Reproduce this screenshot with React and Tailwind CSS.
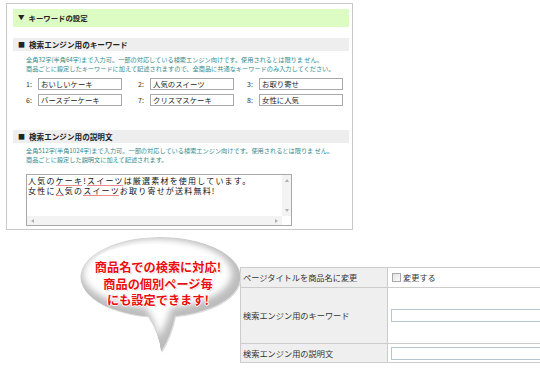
import React from 'react';

const FONT = "font-['Noto_Sans_CJK_JP','Noto_Sans',sans-serif]";

const KEYWORDS = [
    ['1:', 'おいしいケーキ'],
    ['2:', '人気のスイーツ'],
    ['3:', 'お取り寄せ'],
    ['6:', 'バースデーケーキ'],
    ['7:', 'クリスマスケーキ'],
    ['8:', '女性に人気'],
];

const BUBBLE_PATH = 'M148 316.5 A80 40 0 1 1 175 316.3 Q171 336 161 352 Q159 334 148 316.5 Z';

const Squiggle = ({ children }) => (
    <span className="relative inline-block">
        {children}
        <span className="absolute left-0 right-[1px] bottom-[-0.5px] h-[1px] bg-[#ec8c8c]"></span>
    </span>
);

const SectionHead = ({ children, className = '' }) => (
    <div className={`h-[13px] bg-[#eeeeee] pl-[5px] flex items-center text-[7.6px] font-bold text-[#222] ${className}`}>
        <span className="mr-[4px] text-[7px]">■</span>
        {children}
    </div>
);

const Note = ({ lines }) => (
    <div className="pl-[13px] text-[6.2px] leading-[9px] text-[#2f8a8a] whitespace-nowrap">
        {lines.map((l) => (
            <div key={l}>{l}</div>
        ))}
    </div>
);

const Bubble = () => (
    <div className="relative w-[180px] h-[125px] ml-[70px] mt-[2px] shrink-0">
        <svg width="180" height="125" viewBox="70 232 180 125" className="block">
            <defs>
                <clipPath id="bubbleClip">
                    <path d={BUBBLE_PATH} />
                </clipPath>
                <filter id="soft" x="-20%" y="-20%" width="140%" height="140%">
                    <feGaussianBlur stdDeviation="4" />
                </filter>
            </defs>
            <path d={BUBBLE_PATH} fill="#dcdcdc" transform="translate(1 1)" />
            <g clipPath="url(#bubbleClip)">
                <path d={BUBBLE_PATH} fill="#bdbdbd" />
                <path
                    d={BUBBLE_PATH}
                    fill="#ffffff"
                    filter="url(#soft)"
                    transform="translate(157 276) scale(0.93 0.86) translate(-160 -280)"
                />
                <ellipse cx="152" cy="266" rx="60" ry="22" fill="#ffffff" opacity="0.85" />
            </g>
        </svg>
        <div className="absolute left-[8px] top-[27px] w-[160px] text-center text-[12.2px] leading-[16.5px] font-bold text-[#ea0f0f] whitespace-nowrap [text-shadow:1px_0_0_#fff,-1px_0_0_#fff,0_1px_0_#fff,0_-1px_0_#fff,1px_1px_1px_#bbb]">
            <div>商品名での検索に対応!</div>
            <div>商品の個別ページ毎</div>
            <div>にも設定できます!</div>
        </div>
    </div>
);

const SettingsTable = () => (
    <table className="mt-[37px] ml-[-10px] w-[302px] shrink-0 border-collapse text-[8.2px] text-[#333]">
        <tbody>
            <tr className="h-[20px]">
                <td className="w-[163px] border border-[#cccccc] bg-[#efefef] pl-[2px] align-middle whitespace-nowrap">ページタイトルを商品名に変更</td>
                <td className="border border-[#cccccc] bg-white pl-[4px] align-middle">
                    <div className="flex items-center gap-[2px]">
                        <span className="w-[9px] h-[9px] border border-[#a9a9a9] bg-gradient-to-br from-[#e4e4e4] to-[#fafafa]"></span>
                        <span>変更する</span>
                    </div>
                </td>
            </tr>
            <tr className="h-[56px]">
                <td className="border border-[#cccccc] bg-[#efefef] pl-[2px] align-middle whitespace-nowrap">検索エンジン用のキーワード</td>
                <td className="border border-[#cccccc] bg-white pl-[3px] align-middle">
                    <div className="h-[13px] w-[150px] border border-[#b7c6ce] bg-white"></div>
                </td>
            </tr>
            <tr className="h-[19px]">
                <td className="border border-[#cccccc] bg-[#efefef] pl-[2px] align-middle whitespace-nowrap">検索エンジン用の説明文</td>
                <td className="border border-[#cccccc] bg-white pl-[3px] align-middle">
                    <div className="h-[13px] w-[150px] border border-[#b7c6ce] bg-white"></div>
                </td>
            </tr>
        </tbody>
    </table>
);

export default function App() {
    return (
        <div className={`w-[540px] h-[382px] bg-white overflow-hidden ${FONT}`}>
            {/* Settings panel */}
            <div className="ml-[6px] mt-[3px] w-[347px] h-[227px] border border-[#c8c8c8] pl-[6px] pr-[3px] pt-[5px]">
                <div className="h-[18px] bg-[#dcfcc4] pl-[5px] flex items-center text-[7.4px] font-bold text-[#222]">
                    <span className="mr-[4px] text-[6.5px]">▼</span>
                    キーワードの設定
                </div>

                <SectionHead className="mt-[11px]">検索エンジン用のキーワード</SectionHead>
                <div className="mt-[4px]">
                    <Note
                        lines={[
                            '全角32字(半角64字)まで入力可。一部の対応している検索エンジン向けです。使用されるとは限りま せん。',
                            '商品ごとに設定したキーワードに加えて記述されますので、全商品に共通なキーワードのみ入力してください。',
                        ]}
                    />
                </div>

                <div className="mt-[5px] pl-[13px] grid grid-cols-[112px_109px_96px] gap-y-[4px]">
                    {KEYWORDS.map(([label, value]) => (
                        <div key={label} className="flex items-center">
                            <span className="w-[12px] text-[7px] text-[#333]">{label}</span>
                            <div className="w-[84px] h-[12px] border border-[#a8a8a8] bg-white pl-[2px] text-[7.4px] leading-[10px] text-[#222] whitespace-nowrap overflow-hidden">
                                {value}
                            </div>
                        </div>
                    ))}
                </div>

                <SectionHead className="mt-[24px]">検索エンジン用の説明文</SectionHead>
                <div className="mt-[3px]">
                    <Note
                        lines={[
                            '全角512字(半角1024字)まで入力可。一部の対応している検索エンジン向けです。使用されるとは限りま せん。',
                            '商品ごとに設定した説明文に加えて記述されます。',
                        ]}
                    />
                </div>

                {/* Textarea look-alike */}
                <div className="mt-[10px] ml-[13px] w-[266px] h-[52px] border border-[#a8a8a8] bg-white flex flex-col">
                    <div className="flex flex-1">
                        <div className="flex-1 pl-[1px] pt-[1px] text-[8px] leading-[9.5px] tracking-[1.2px] text-[#111] whitespace-nowrap overflow-hidden">
                            <div>
                                人気の<Squiggle>ケーキ</Squiggle>!<Squiggle>スイーツ</Squiggle>は厳選素材を使用しています。
                            </div>
                            <div>
                                女性に<Squiggle>人</Squiggle>気の<Squiggle>スイーツ</Squiggle>お取り寄せが送料無料!
                            </div>
                        </div>
                        <div className="w-[9px] bg-[#f3f3f3] flex flex-col items-center justify-between py-[4px]">
                            <span className="w-0 h-0 border-x-[2px] border-x-transparent border-b-[3px] border-b-[#b0b0b0]"></span>
                            <span className="w-0 h-0 border-x-[2px] border-x-transparent border-t-[3px] border-t-[#b0b0b0]"></span>
                        </div>
                    </div>
                    <div className="h-[9px] flex">
                        <div className="flex-1 bg-[#f3f3f3] flex items-center justify-between px-[4px]">
                            <span className="w-0 h-0 border-y-[2px] border-y-transparent border-r-[3px] border-r-[#b0b0b0]"></span>
                            <span className="w-0 h-0 border-y-[2px] border-y-transparent border-l-[3px] border-l-[#b0b0b0]"></span>
                        </div>
                        <div className="w-[9px] bg-white"></div>
                    </div>
                </div>
            </div>

            {/* Bubble + per-item settings */}
            <div className="flex items-start">
                <Bubble />
                <SettingsTable />
            </div>
        </div>
    );
}
